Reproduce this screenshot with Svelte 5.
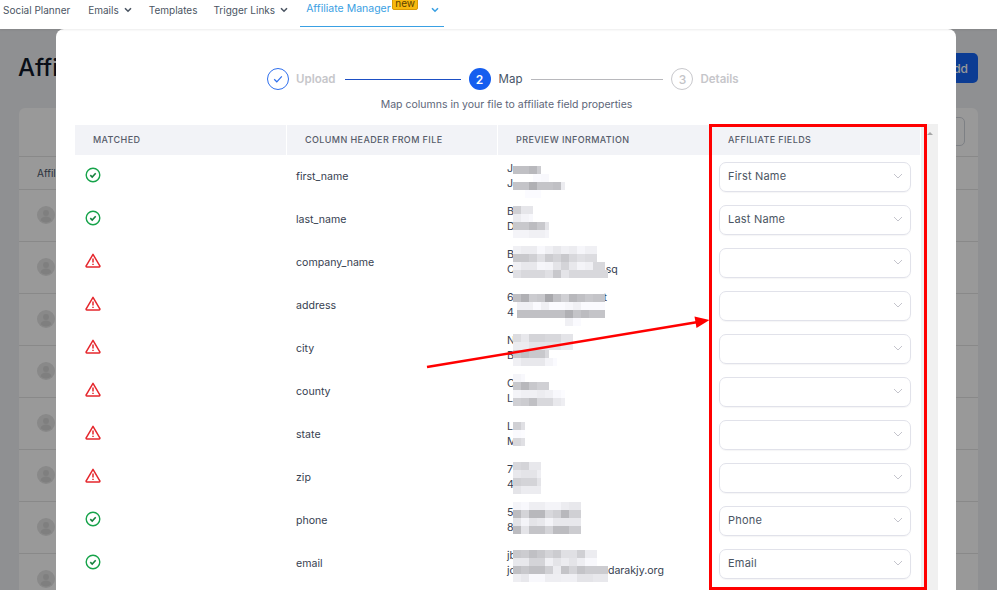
<script lang="ts">
	// preview strips: [x offset from the cell's mosaic origin, width, grey levels as hex]
	type Strip = [number, number, string];

	const rows: {
		name: string;
		ok: boolean;
		field: string;
		lines: { head: string; gap?: number; tail?: string }[];
		top: number;
		strips: Strip[];
	}[] = [
		{
			name: 'first_name', ok: true, field: 'First Name',
			lines: [{ head: 'J' }, { head: 'J' }],
			top: 11,
			strips: [
				[0, 28, 'c0 c0 b8 cc'],
				[20, 16, 'fa f8'],
				[0, 52, 'c4 c4 b0 c4 c4 c0 ec'],
				[12, 16, 'fb fb']
			]
		},
		{
			name: 'last_name', ok: true, field: 'Last Name',
			lines: [{ head: 'B' }, { head: 'D' }],
			top: 8,
			strips: [
				[0, 20, 'cf e6 e6'],
				[0, 20, 'ec f4 f8'],
				[0, 36, 'c8 c8 bc c8 e4'],
				[0, 36, 'f4 f4 f0 f0 f4']
			]
		},
		{
			name: 'company_name', ok: false, field: '',
			lines: [{ head: 'B' }, { head: 'C', gap: 91, tail: 'sq' }],
			top: 5,
			strips: [
				[0, 84, 'f0 ec ec f8 f0 e8 f0 ec f6 f0 f0'],
				[0, 84, 'c8 c8 d0 e0 cc d4 c8 d8 e0 dc dc'],
				[0, 92, 'f0 e8 e8 f6 f4 e4 d4 e8 f4 f0 d8 d8'],
				[0, 95, 'e0 d8 d8 d8 e0 c8 e4 d8 d8 d8 d8 d8']
			]
		},
		{
			name: 'address', ok: false, field: '',
			lines: [{ head: '6', gap: 90, tail: 't' }, { head: '4' }],
			top: 10,
			strips: [
				[0, 92, 'c0 b0 cc c8 a8 c0 d0 b8 c0 c8 c4 c4'],
				[4, 88, 'f0 f0 fa f0 fa fa f6 f0 fa fa fa'],
				[4, 88, 'c0 c0 c0 c0 c0 c0 b0 c4 bc c4 c4'],
				[52, 16, 'f0 fa']
			]
		},
		{
			name: 'city', ok: false, field: '',
			lines: [{ head: 'N' }, { head: 'B' }],
			top: 7,
			strips: [
				[0, 60, 'dc e8 d4 d4 d8 d8 e4 e4'],
				[0, 60, 'ec ec e4 e4 e4 e4 ec ec'],
				[0, 36, 'c8 c0 c8 c8 d8'],
				[0, 44, 'f0 e8 e8 e8 f4 fa']
			]
		},
		{
			name: 'county', ok: false, field: '',
			lines: [{ head: 'C' }, { head: 'L' }],
			top: 4,
			strips: [
				[0, 12, 'f4 f8'],
				[0, 36, 'c8 b8 c8 d0 d0'],
				[0, 52, 'f4 f0 f0 ec f0 f8 fc'],
				[0, 52, 'd0 cc c0 d8 d8 e8 ee']
			]
		},
		{
			name: 'state', ok: false, field: '',
			lines: [{ head: 'L' }, { head: 'M' }],
			top: 9,
			strips: [
				[0, 12, 'd0 e0'],
				[0, 12, 'fa fc'],
				[0, 12, 'd8 e0']
			]
		},
		{
			name: 'zip', ok: false, field: '',
			lines: [{ head: '7' }, { head: '4' }],
			top: 6,
			strips: [
				[0, 28, 'd8 d4 e8 e8'],
				[0, 28, 'e8 e4 e4 ee'],
				[0, 28, 'd0 d4 d4 e4'],
				[0, 28, 'e4 ec ec ec']
			]
		},
		{
			name: 'phone', ok: true, field: 'Phone',
			lines: [{ head: '5' }, { head: '8' }],
			top: 3,
			strips: [
				[0, 68, 'f4 f8 ee ee f4 f4 ec e8 e8'],
				[0, 68, 'bc d4 b8 b8 d8 d0 b8 d0 d0'],
				[0, 68, 'e4 f4 e4 e8 f4 e8 e8 e8 e8'],
				[0, 68, 'bc e4 c4 c4 d4 bc bc cc cc']
			]
		},
		{
			name: 'email', ok: true, field: 'Email',
			lines: [{ head: 'jb' }, { head: 'jo', gap: 92, tail: 'darakjy.org' }],
			top: 8,
			strips: [
				[0, 84, 'c8 cc c0 c8 d4 cc e0 e0 d0 ec ec'],
				[0, 84, 'e8 e8 d4 d4 f0 e4 ec e4 ee f8 f8'],
				[0, 95, 'c0 c8 c0 c0 d0 ec c4 d4 c4 cc cc cc'],
				[0, 95, 'ee e8 f8 f8 ee ee f0 f0 e4 e4 e8 e8']
			]
		}
	];

	const bgRows = Array.from({ length: 8 }, (_, i) => i);

	const cellColor = (hex: string) => {
		const v = parseInt(hex, 16);
		return `rgb(${v},${v},${Math.min(v + 4, 255)})`;
	};
</script>

<div class="page">
	<nav class="topnav">
		<span class="item">Social Planner</span>
		<span class="item">Emails
			<svg class="caret" viewBox="0 0 8 6"><path d="M1 1.200 4 4.200 7 1.200" /></svg>
		</span>
		<span class="item templates">Templates</span>
		<span class="item">Trigger Links
			<svg class="caret" viewBox="0 0 8 6"><path d="M1 1.200 4 4.200 7 1.200" /></svg>
		</span>
		<span class="item tab">Affiliate Manager
			<span class="badge">new</span>
			<svg class="caret" viewBox="0 0 8 6"><path d="M1 1.200 4 4.200 7 1.200" /></svg>
		</span>
	</nav>

	<main class="behind">
		<div class="title-row">
			<h1>Affiliates</h1>
			<button class="add">Add</button>
		</div>
		<section class="panel">
			<div class="toolbar"><span class="searchbox"></span></div>
			<div class="head-row">Affiliate</div>
			{#each bgRows as i (i)}
				<div class="bg-row">
					<svg class="avatar" viewBox="0 0 18 18">
						<circle cx="9" cy="9" r="9" fill="#e4e4e4" />
						<circle cx="9" cy="7" r="3" fill="#d4d4d4" />
						<path d="M3.500 14.500c.6-3 3-4 5.500-4s4.900 1 5.500 4a9 9 0 0 1-11 0z" fill="#d4d4d4" />
					</svg>
				</div>
			{/each}
		</section>
	</main>

	<div class="overlay"></div>

	<div class="modal">
		<div class="stepper">
			<span class="circle done">
				<svg viewBox="0 0 12 12" width="12" height="12"><path d="M2.200 6.300 4.800 8.800 9.800 3.400" /></svg>
			</span>
			<span class="step-label muted">Upload</span>
			<span class="bar bar-a"></span>
			<span class="circle current">2</span>
			<span class="step-label map">Map</span>
			<span class="bar bar-b"></span>
			<span class="circle todo">3</span>
			<span class="step-label muted">Details</span>
		</div>
		<p class="subtitle">Map columns in your file to affiliate field properties</p>

		<div class="table-wrap">
			<div class="table">
				<div class="thead">
					<div>Matched</div>
					<div>Column header from file</div>
					<div>Preview information</div>
					<div>Affiliate fields</div>
				</div>
				{#each rows as row (row.name)}
					<div class="row">
						<div class="cell-icon">
							{#if row.ok}
								<svg viewBox="0 0 16 16" width="16" height="16" fill="none">
									<circle cx="8" cy="8" r="6.800" stroke="#16a34a" stroke-width="1.400" />
									<path d="M5.300 8.200 7.200 10 10.700 6.300" stroke="#15803d" stroke-width="1.600" />
								</svg>
							{:else}
								<svg viewBox="0 0 16 16" width="16" height="16" fill="none">
									<path d="M8 1.400 14.800 12.800a.7.7 0 0 1-.6 1.100H1.800a.7.7 0 0 1-.6-1.100z" stroke="#e5272d" stroke-width="1.500" stroke-linejoin="round" />
									<path d="M8 5.600v3.800M8 10.800v1.300" stroke="#e5272d" stroke-width="1.500" />
								</svg>
							{/if}
						</div>
						<div class="cell-name">{row.name}</div>
						<div class="cell-preview">
							{#each row.lines as line, i (i)}
								<div class="pline">{line.head}{#if line.tail}<span class="tail" style="margin-left: {line.gap}px">{line.tail}</span>{/if}</div>
							{/each}
							<div class="mosaic" style="top: {row.top}px">
								{#each row.strips as strip, i (i)}
									<div class="strip" style="margin-left: {strip[0]}px; width: {strip[1]}px">
										{#each strip[2].split(' ') as hex, j (j)}
											<span style="background: {cellColor(hex)}"></span>
										{/each}
									</div>
								{/each}
							</div>
						</div>
						<div class="cell-field">
							<div class="select">
								<span>{row.field}</span>
								<svg viewBox="0 0 10 6" width="10" height="6"><path d="M1 1 5 5 9 1" /></svg>
							</div>
						</div>
					</div>
				{/each}
			</div>
			<div class="scrolltrack"><span class="scrollup"></span></div>
		</div>
	</div>

	<!-- annotation drawn on top of the screenshot -->
	<svg class="annotation" width="997" height="590" viewBox="0 0 997 590">
		<rect x="710.500" y="125.500" width="215" height="463" fill="none" stroke="#ff0000" stroke-width="3" />
		<line x1="427" y1="367" x2="698" y2="322" stroke="#ff0000" stroke-width="2.500" />
		<polygon points="709.500,320 694.500,316.500 696.500,328" fill="#ff0000" />
	</svg>
</div>

<style>
	:global(body) {
		margin: 0;
	}
	.page {
		position: relative;
		width: 997px;
		height: 590px;
		overflow: hidden;
		background: #eef0f3;
		font-family: Inter, 'Noto Sans', sans-serif;
		font-size: 12px;
		color: #374151;
	}

	.topnav {
		position: relative;
		z-index: 3;
		display: flex;
		align-items: flex-start;
		gap: 17px;
		height: 29px;
		padding-left: 3px;
		box-sizing: border-box;
		background: #fff;
		box-shadow: 0 1px 2px rgba(0, 0, 0, 0.08);
		font-size: 10px;
		color: #4b5563;
		line-height: 20px;
		white-space: nowrap;
	}
	.item {
		display: flex;
		align-items: center;
		gap: 5px;
	}
	.item:first-child {
		margin-right: 1px;
	}
	.templates {
		margin-right: -1px;
	}
	.caret {
		width: 8px;
		height: 6px;
		fill: none;
		stroke: currentColor;
		stroke-width: 1.600;
	}
	.tab {
		position: relative;
		height: 27px;
		width: 144px;
		box-sizing: border-box;
		align-items: flex-start;
		margin-left: -5px;
		padding-left: 6px;
		font-size: 10.500px;
		color: #3aa0e3;
		line-height: 18px;
		border-bottom: 1px solid #3aa0e3;
	}
	.tab .caret {
		position: absolute;
		left: 131px;
		top: 7px;
	}
	.badge {
		position: absolute;
		left: 92px;
		top: -2px;
		width: 26px;
		height: 12px;
		box-sizing: border-box;
		border: 1px solid #d99a06;
		border-radius: 2px;
		background: #f7b90f;
		color: #5c4300;
		font-size: 10px;
		line-height: 8px;
		text-align: center;
	}

	.behind {
		padding: 0 19px;
	}
	.title-row {
		display: flex;
		justify-content: space-between;
		align-items: center;
		height: 30px;
		margin-top: 24px;
	}
	h1 {
		margin: -2px 0 0 -1px;
		font-size: 24px;
		font-weight: 500;
		color: #101828;
	}
	.add {
		width: 60px;
		height: 30px;
		border: 0;
		border-radius: 5px;
		background: #1565f5;
		color: #fff;
		font: 500 12px Inter, sans-serif;
		text-align: right;
		padding: 0 10px 0 0;
	}
	.panel {
		margin-top: 25px;
		background: #fff;
		border-radius: 6px;
	}
	.toolbar {
		display: flex;
		justify-content: flex-end;
		height: 49px;
		padding: 9px 13px 0 0;
		box-sizing: border-box;
		border-bottom: 1px solid #e4e4e4;
	}
	.searchbox {
		width: 120px;
		height: 29px;
		border: 1px solid #d0d5dd;
		border-radius: 5px;
		box-sizing: border-box;
	}
	.head-row {
		height: 33px;
		box-sizing: border-box;
		padding-left: 18px;
		line-height: 32px;
		font-size: 10px;
		border-bottom: 1px solid #e4e4e4;
		color: #475467;
	}
	.bg-row {
		display: flex;
		align-items: center;
		height: 52px;
		box-sizing: border-box;
		padding: 0 0 2px 18px;
		border-bottom: 1px solid #e4e4e4;
	}
	.avatar {
		width: 18px;
		height: 18px;
	}

	.overlay {
		position: absolute;
		inset: 29px 0 0 0;
		z-index: 1;
		background: rgba(0, 0, 0, 0.4);
	}
	.modal {
		position: absolute;
		left: 56px;
		top: 29px;
		z-index: 2;
		width: 900px;
		height: 600px;
		box-sizing: border-box;
		padding: 38px 18px 0 19px;
		background: #fff;
		border-radius: 8px 8px 0 0;
	}

	.stepper {
		display: flex;
		align-items: center;
		height: 24px;
		margin-left: 192px;
		font-size: 11.500px;
	}
	.circle {
		display: flex;
		align-items: center;
		justify-content: center;
		width: 22px;
		height: 22px;
		box-sizing: border-box;
		border-radius: 50%;
		font-size: 12px;
		font-weight: 600;
	}
	.done {
		border: 1px solid #2f6fed;
	}
	.done path {
		fill: none;
		stroke: #2f6fed;
		stroke-width: 1.200;
	}
	.current {
		background: #155eef;
		color: #fff;
	}
	.todo {
		border: 1px solid #c8c8cc;
		color: #c4c4c8;
		font-weight: 500;
	}
	.step-label {
		margin-left: 7px;
		color: #475467;
		font-weight: 500;
	}
	.map {
		margin-left: 8px;
		font-weight: 400;
	}
	.muted {
		color: #c6c6ca;
		font-weight: 600;
	}
	.bar {
		height: 1px;
		margin: 1px 8px 0 9px;
	}
	.bar-a {
		width: 116px;
		background: #1d4fc4;
	}
	.bar-b {
		width: 132px;
		background: #b8b8bc;
	}
	.subtitle {
		margin: 6px 0 0;
		text-align: center;
		font-size: 10.500px;
		line-height: 16px;
		color: #5d6679;
	}

	.table-wrap {
		display: flex;
		align-items: flex-start;
		margin-top: 11px;
	}
	.table {
		width: 845px;
		margin-top: 1px;
		flex: none;
	}
	.thead,
	.row {
		display: grid;
		grid-template-columns: 211px 210px 211px 210px;
		column-gap: 1px;
	}
	.thead {
		height: 30px;
	}
	.thead div {
		display: flex;
		align-items: center;
		padding: 0 0 1px 18px;
		background: #f2f3f7;
		font-size: 9px;
		font-weight: 500;
		letter-spacing: 0.4px;
		text-transform: uppercase;
		color: #565c6a;
	}
	.row {
		height: 43px;
		align-items: center;
	}
	.cell-icon {
		display: flex;
		padding: 0 0 4px 10px;
	}
	.cell-name {
		padding-left: 9px;
		font-size: 10.600px;
	}
	.cell-preview {
		position: relative;
		align-self: stretch;
		display: flex;
		flex-direction: column;
		justify-content: center;
		padding-left: 9px;
		font-size: 10.600px;
		line-height: 15px;
		padding-bottom: 1px;
		box-sizing: border-box;
	}
	.pline {
		white-space: nowrap;
	}
	.mosaic {
		position: absolute;
		left: 15px;
	}
	.strip {
		display: flex;
		height: 8px;
		overflow: hidden;
	}
	.strip span {
		flex: none;
		width: 8px;
		height: 8px;
	}
	.cell-field {
		padding: 0 9px;
	}
	.select {
		display: flex;
		align-items: center;
		justify-content: space-between;
		height: 30px;
		box-sizing: border-box;
		padding: 0 7px 1px 8px;
		border: 1px solid #e1e2ea;
		border-radius: 7px;
		box-shadow: 0 1px 1px rgba(16, 24, 40, 0.04);
		font-size: 11px;
		letter-spacing: 0.2px;
		color: #4b5563;
	}
	.select path {
		fill: none;
		stroke: #c4c4cc;
		stroke-width: 1;
	}
	.scrolltrack {
		position: relative;
		flex: none;
		width: 17px;
		height: 500px;
		margin-left: 1px;
		background: #f0f0f0;
	}
	.scrollup {
		position: absolute;
		left: 6px;
		top: 8px;
		border-left: 3px solid transparent;
		border-right: 3px solid transparent;
		border-bottom: 3px solid #a6a6a6;
	}
	.annotation {
		position: absolute;
		left: 0;
		top: 0;
		z-index: 4;
		pointer-events: none;
	}
</style>
